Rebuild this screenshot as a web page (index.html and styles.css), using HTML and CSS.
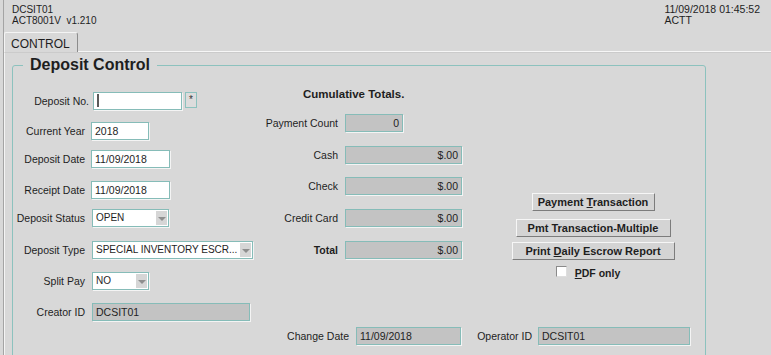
FILE: index.html
```html
<!DOCTYPE html>
<html>
<head>
<link rel="stylesheet" href="styles.css">
</head>
<body>
<div class="window">
  <div class="header">
    <div>DCSIT01<br>ACT8001V&nbsp; v1.210</div>
    <div class="header-right">11/09/2018 01:45:52<br>ACTT</div>
  </div>

  <div class="tabs">
    <div class="tab">CONTROL</div>
  </div>

  <div class="panel">
    <fieldset class="group">
      <legend>Deposit Control</legend>

      <div class="columns">
        <div class="col-left">
          <div class="row">
            <label class="lbl lbl-wide">Deposit No.</label>
            <div class="field w-deposit"><span class="caret"></span></div>
            <button class="lookup">*</button>
          </div>
          <div class="row">
            <label class="lbl">Current Year</label>
            <div class="field w-year">2018</div>
          </div>
          <div class="row">
            <label class="lbl">Deposit Date</label>
            <div class="field w-date">11/09/2018</div>
          </div>
          <div class="row">
            <label class="lbl">Receipt Date</label>
            <div class="field w-date">11/09/2018</div>
          </div>
          <div class="row">
            <label class="lbl">Deposit Status</label>
            <div class="field select w-status"><span class="value">OPEN</span><span class="arrow"></span></div>
          </div>
          <div class="row">
            <label class="lbl">Deposit Type</label>
            <div class="field select w-type"><span class="value">SPECIAL INVENTORY ESCR...</span><span class="arrow"></span></div>
          </div>
          <div class="row">
            <label class="lbl">Split Pay</label>
            <div class="field select w-split"><span class="value">NO</span><span class="arrow"></span></div>
          </div>
          <div class="row">
            <label class="lbl">Creator ID</label>
            <div class="field readonly w-creator">DCSIT01</div>
          </div>
        </div>

        <div class="col-mid">
          <div class="totals-title">Cumulative Totals.</div>
          <div class="row">
            <label class="lbl lbl-mid">Payment Count</label>
            <div class="field readonly num w-count">0</div>
          </div>
          <div class="row">
            <label class="lbl lbl-mid">Cash</label>
            <div class="field readonly num w-amount">$.00</div>
          </div>
          <div class="row">
            <label class="lbl lbl-mid">Check</label>
            <div class="field readonly num w-amount">$.00</div>
          </div>
          <div class="row">
            <label class="lbl lbl-mid">Credit Card</label>
            <div class="field readonly num w-amount">$.00</div>
          </div>
          <div class="row">
            <label class="lbl lbl-mid bold">Total</label>
            <div class="field readonly num w-amount">$.00</div>
          </div>
        </div>

        <div class="col-right">
          <button class="btn btn-pay">Payment <u>T</u>ransaction</button>
          <button class="btn btn-multi">Pmt Transaction-Multiple</button>
          <button class="btn btn-print">Print <u>D</u>aily Escrow Report</button>
          <div class="check-row">
            <span class="checkbox"></span>
            <label class="check-label"><u>P</u>DF only</label>
          </div>
        </div>
      </div>

      <div class="footer-row">
        <label class="lbl lbl-change">Change Date</label>
        <div class="field readonly w-change">11/09/2018</div>
        <label class="lbl lbl-operator">Operator ID</label>
        <div class="field readonly w-operator">DCSIT01</div>
      </div>
    </fieldset>
  </div>
</div>
</body>
</html>
```

FILE: styles.css
```css
html,
body {
  margin: 0;
  height: 100%;
  overflow: hidden;
  background-color: #d8d8d8;
}
body {
  font-family: "Liberation Sans", Arial, sans-serif;
  font-size: 10.5px;
  color: #1e1e1e;
}
.window {
  margin-left: 3px;
  border-left: 1px solid #a4a4a4;
  height: 100%;
  display: flex;
  flex-direction: column;
}
.header {
  display: flex;
  justify-content: space-between;
  height: 27px;
  padding: 4px 11px 0 8px;
  font-size: 10px;
  line-height: 11px;
}
.header-right {
  font-size: 10.5px;
}
.tabs {
  height: 20px;
  border-bottom: 1px solid #f6f6f6;
}
.tab {
  width: 74px;
  height: 20px;
  box-sizing: border-box;
  border: 1px solid #f4f4f4;
  border-right-color: #8c8c8c;
  border-bottom: none;
  border-radius: 2px 3px 0 0;
  background-color: #d8d8d8;
  padding: 4px 0 0 6px;
  font-size: 12px;
  line-height: 14px;
  position: relative;
  top: 1px;
}
.panel {
  flex: 1;
  overflow: hidden;
  border-top: 1px solid #cbcbcb;
  border-left: 1px solid #f4f4f4;
  padding: 0 0 0 7px;
}
.group {
  width: 694px;
  box-sizing: border-box;
  margin: 3px 0 0 0;
  padding: 0;
  border: 1px solid #8cc2be;
  border-radius: 3px;
  min-height: 330px;
}
.group legend {
  margin-left: 10px;
  padding: 0 7px;
  font-size: 16px;
  font-weight: bold;
  line-height: 18px;
}
.columns {
  display: flex;
  padding-top: 12px;
}
.col-left {
  width: 250px;
  display: grid;
  grid-template-rows: 30px 28px 31px 28px 32px 31px 31px 18px;
  padding-top: 6px;
}
.col-mid {
  width: 200px;
  display: grid;
  grid-template-rows: 28px 32px 31px 32px 32px 18px;
}
.col-right {
  flex: 1;
  display: flex;
  flex-direction: column;
  align-items: center;
  padding: 107px 0 0 18px;
}
.row {
  display: flex;
  align-items: flex-start;
}
.lbl {
  width: 72px;
  margin-right: 6px;
  text-align: right;
  line-height: 18px;
  white-space: nowrap;
}
.lbl-wide {
  width: 76px;
  margin-right: 4px;
}
.lbl-mid {
  width: 75px;
  margin-right: 7px;
}
.bold {
  font-weight: bold;
}
.totals-title {
  margin-left: 40px;
  font-size: 11.5px;
  font-weight: bold;
  line-height: 16px;
}
.field {
  height: 18px;
  box-sizing: border-box;
  border: 1px solid #86bcb8;
  box-shadow: 1px 1px 0 #f4f4f4;
  background-color: #ffffff;
  padding: 0 3px;
  line-height: 16px;
  white-space: nowrap;
  overflow: hidden;
}
.readonly {
  background-color: #c3c3c3;
}
.num {
  text-align: right;
}
.caret {
  display: inline-block;
  width: 2px;
  height: 13px;
  margin-top: 1px;
  background-color: #5a5a5a;
  vertical-align: top;
}
.select {
  display: flex;
  padding-right: 1px;
}
.select .value {
  flex: 1;
  overflow: hidden;
  font-size: 10px;
}
.select .arrow {
  width: 11px;
  margin: 1px 0;
  background-color: #d6d6d6;
  position: relative;
}
.select .arrow::after {
  content: "";
  position: absolute;
  left: 2px;
  top: 6px;
  border-left: 4px solid transparent;
  border-right: 4px solid transparent;
  border-top: 4px solid #8e8e8e;
}
.lookup {
  width: 12px;
  height: 16px;
  margin: 0 0 0 3px;
  padding: 0;
  border: 1px solid #8cc2be;
  background-color: #dcdcdc;
  font-family: "Liberation Sans", Arial, sans-serif;
  font-size: 10px;
  line-height: 14px;
  color: #333;
}
.w-deposit { width: 89px; }
.w-year { width: 58px; }
.w-date { width: 79px; }
.w-status { width: 77px; margin-left: 1px; }
.w-type { width: 161px; margin-left: 1px; }
.w-split { width: 57px; margin-left: 1px; }
.w-creator { width: 158px; margin-left: 1px; }
.w-count { width: 58px; }
.w-amount { width: 117px; }
.w-change { width: 105px; }
.w-operator { width: 152px; }
.btn {
  height: 18px;
  padding: 0;
  border: 1px solid;
  border-color: #f6f6f6 #7c7c7c #7c7c7c #f6f6f6;
  background-color: #d4d4d4;
  font-family: "Liberation Sans", Arial, sans-serif;
  font-size: 11px;
  font-weight: bold;
  line-height: 16px;
  color: #1e1e1e;
}
.btn-pay {
  width: 123px;
  margin-bottom: 8px;
}
.btn-multi {
  width: 155px;
  margin-bottom: 5px;
}
.btn-print {
  width: 163px;
  margin-bottom: 6px;
}
.check-row {
  display: flex;
  align-items: flex-start;
  margin-right: 10px;
}
.checkbox {
  width: 11px;
  height: 11px;
  box-sizing: border-box;
  border: 1px solid #8a8a8a;
  border-right-color: #dedede;
  border-bottom-color: #dedede;
  background-color: #ffffff;
}
.check-label {
  margin-left: 8px;
  font-weight: bold;
  line-height: 13px;
  padding-top: 1px;
}
.footer-row {
  display: flex;
  margin: 6px 0 0 267px;
}
.lbl-change {
  width: 69px;
  margin-right: 7px;
}
.lbl-operator {
  width: 71px;
  margin-right: 6px;
}
```
